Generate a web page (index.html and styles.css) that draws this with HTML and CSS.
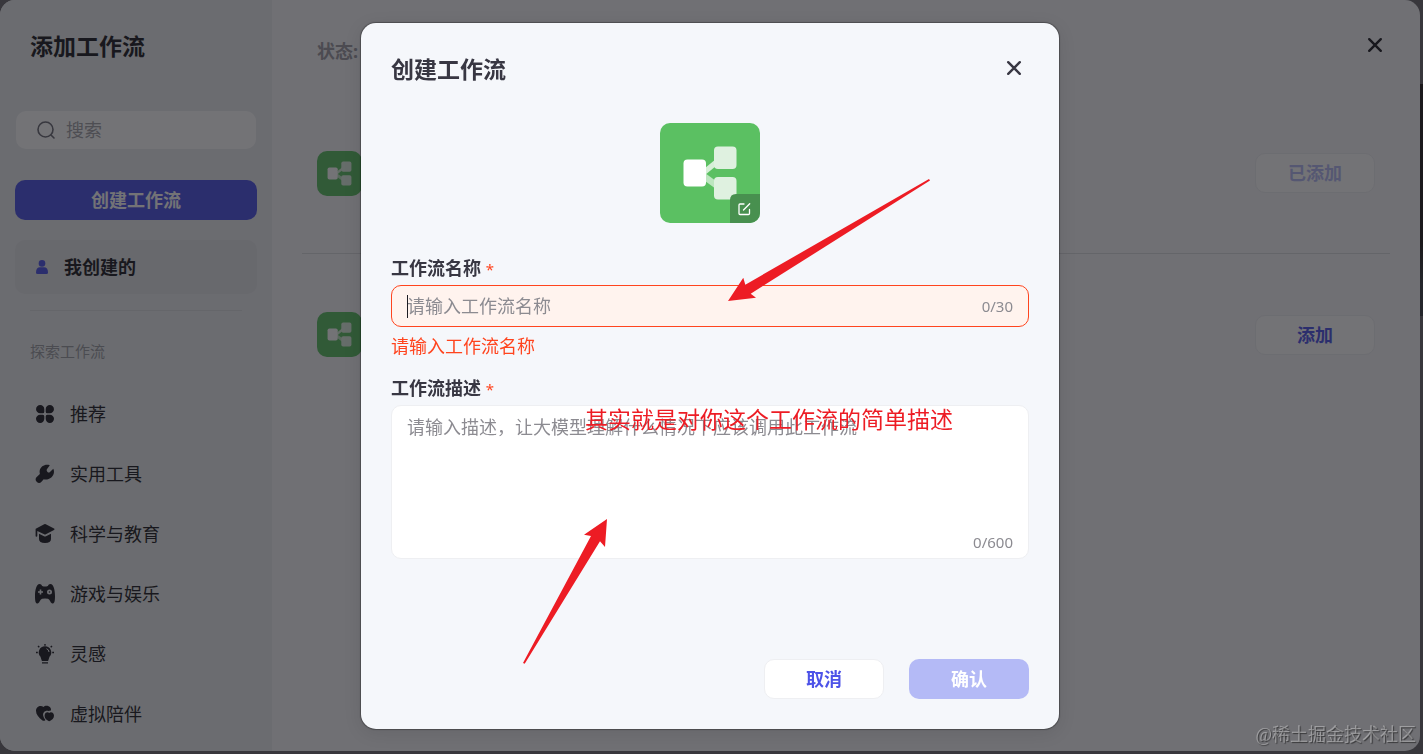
FILE: index.html
```html
<!DOCTYPE html>
<html lang="zh-CN">
<head>
<meta charset="utf-8">
<meta name="viewport" content="width=device-width, initial-scale=1">
<title>创建工作流</title>
<link rel="stylesheet" href="styles.css">
</head>
<body>
<svg class="defs" width="0" height="0" aria-hidden="true">
  <symbol id="flow" viewBox="0 0 100 100">
    <path d="M45 45 L56 36 L56 43 L45 52Z" fill="#fff" opacity=".75"/>
    <path d="M45 50 L56 58 L56 66 L45 58Z" fill="#fff" opacity=".6"/>
    <rect x="54" y="23.5" width="22.5" height="22.5" rx="4" fill="#dff1e0"/>
    <rect x="54" y="54" width="22.5" height="22.5" rx="4" fill="#dff1e0"/>
    <rect x="23.5" y="36.5" width="22.5" height="27" rx="4" fill="#fff"/>
  </symbol>
</svg>

<div class="shell">
  <div class="panel">
    <aside class="sidebar">
      <h1 class="title sidebar-title">添加工作流</h1>
      <label class="search">
        <svg class="icon" viewBox="0 0 20 20" fill="none" stroke="currentColor" stroke-width="1.6" stroke-linecap="round"><circle cx="9.500" cy="9.500" r="7.500"/><path d="M15 15l3 3"/></svg>
        <input class="search-input" type="search" placeholder="搜索" aria-label="搜索">
      </label>
      <button class="btn btn-primary" type="button">创建工作流</button>
      <a class="mine" href="#mine">
        <svg class="mine-icon" viewBox="0 0 14 14" fill="currentColor"><circle cx="7" cy="3.400" r="3.300"/><path d="M1 12.500C1 9 2.500 7.300 5 7.300H9C11.500 7.300 13 9 13 12.500Q13 14 11.500 14H2.500Q1 14 1 12.500Z"/></svg>
        我创建的
      </a>
      <hr class="rule sidebar-rule">
      <h2 class="group">探索工作流</h2>
      <nav class="nav">
        <a class="nav-item" href="#recommend">
          <svg class="icon" viewBox="0 0 20 20" fill="currentColor"><path d="M5.200 1A4.100 4.100 0 0 1 9.300 5.200V7.800Q9.300 9.300 7.800 9.300H5.200A4.150 4.150 0 0 1 5.200 1ZM14.800 1A4.150 4.150 0 0 1 14.800 9.300H12.200Q10.700 9.300 10.700 7.800V5.200A4.100 4.100 0 0 1 14.800 1ZM5.200 10.700H7.800Q9.300 10.700 9.300 12.200V14.800A4.150 4.150 0 1 1 5.200 10.700ZM12.200 10.700H14.800A4.150 4.150 0 1 1 10.700 14.800V12.200Q10.700 10.700 12.200 10.700Z"/></svg>
          推荐</a>
        <a class="nav-item" href="#tools">
          <svg class="icon" viewBox="0 0 20 20" fill="currentColor"><path d="M14.800 1.200C10.500-.400 5.500 2 4.700 6.500C4.500 7.800 4.600 8.800 4.900 9.900L1.700 13A3.200 3.200 0 0 0 1.700 17.800A3.300 3.300 0 0 0 6.500 17.800L8.700 15.300C13.500 16.500 18.800 13 19 8C19 6.600 18.800 5.500 18.300 4.700L14.700 8.300Q13.500 9 12.500 7.900Q11.200 6.900 11.900 5.200Z"/></svg>
          实用工具</a>
        <a class="nav-item" href="#science">
          <svg class="icon" viewBox="0 0 20 20" fill="currentColor"><path d="M9.200 .300Q10 -.100 10.800 .300L19 4.500Q20 5.200 19 5.900L10.800 10.200Q10 10.600 9.200 10.200L2.300 6.900V12Q2.200 12.800 1.400 12.800Q.600 12.800 .600 12V5.500Q.500 4.800 1.200 4.500Z"/><path d="M4 9.700L9 12.200Q10 12.700 11 12.200L16 9.700V15Q16 19 10 19Q4 19 4 15Z"/></svg>
          科学与教育</a>
        <a class="nav-item" href="#games">
          <svg class="icon" viewBox="0 0 20 20" fill="currentColor" fill-rule="evenodd"><path d="M4.500 0C6 0 6.500 .800 7.200 2Q10 3 12.800 2C13.500 .800 14 0 15.500 0C18.500 0 20 6 20 12C20 17 19.500 19.500 17.500 19.500C15.500 19.500 15 15.500 13 14.800Q10 14 7 14.800C5 15.500 4.500 19.500 2.500 19.500C.500 19.500 0 17 0 12C0 6 1.500 0 4.500 0ZM4.700 5.500V7.200H3V8.800H4.700V10.500H6.300V8.800H8V7.200H6.300V5.500ZM14.500 5.500A2.500 2.500 0 1 0 14.500 10.500A2.500 2.500 0 1 0 14.500 5.500ZM14.500 7.200A.8 .8 0 1 1 14.500 8.800A.8 .8 0 1 1 14.500 7.200Z"/></svg>
          游戏与娱乐</a>
        <a class="nav-item" href="#ideas">
          <svg class="icon" viewBox="0 0 20 20" fill="currentColor"><path d="M10 2.300A6.200 6.200 0 0 1 14.500 12.800L13.300 16.500Q13.100 17 12.500 17H7.500Q6.900 17 6.700 16.500L5.500 12.800A6.200 6.200 0 0 1 10 2.300Z"/><path d="M7 18.900H13M10 0V1.800M1 8.500H2.800M17.200 8.500H19M3 2L4.300 3.300M17 2L15.700 3.300" stroke="currentColor" stroke-width="1.400"/><path d="M11.500 4.700Q14 5.500 14 8" fill="none" stroke="#ebedf0" stroke-width="1"/></svg>
          灵感</a>
        <a class="nav-item" href="#companion">
          <svg class="icon" viewBox="0 0 20 20" fill="currentColor"><path d="M8.500 3C10 1.300 13.700 1.500 15.300 3.600Q16.200 4.800 16 6.600Q14.600 6.500 13.700 7.100C10.500 5.800 7.500 8.300 8.200 11.800Q8.600 14 10.500 16Q9 17.400 7.500 16.500C3.500 13.500 1 10.500 1 6.800C1 2.500 5.800 .600 8.500 3Z"/><path d="M14.200 9C15.800 7.500 19 8.600 19 11.700C19 14 17 16 14.900 17Q14.200 17.300 13.500 17C11.400 16 9.600 14 9.600 11.700C9.600 8.600 12.700 7.500 14.200 9Z"/></svg>
          虚拟陪伴</a>
      </nav>
    </aside>

    <main class="content">
      <header class="content-head">
        <span class="status">状态:</span>
        <button class="close" type="button" aria-label="关闭面板"><svg class="icon-close" viewBox="0 0 16 16" fill="none" stroke="currentColor" stroke-width="2.400" stroke-linecap="round"><path d="M2.200 2.200L13.800 13.800M13.800 2.200L2.200 13.800"/></svg></button>
      </header>
      <ul class="list">
        <li class="row">
          <svg class="tile" viewBox="0 0 100 100"><use href="#flow"/></svg>
          <button class="btn btn-plain is-added" type="button" disabled>已添加</button>
        </li>
        <li class="row">
          <svg class="tile" viewBox="0 0 100 100"><use href="#flow"/></svg>
          <button class="btn btn-plain" type="button">添加</button>
        </li>
      </ul>
    </main>
  </div>
</div>

<div class="overlay">
  <form class="modal" role="dialog" aria-labelledby="dialog-title">
    <header class="modal-head">
      <h2 class="title" id="dialog-title">创建工作流</h2>
      <button class="close" type="button" aria-label="关闭"><svg class="icon-close" viewBox="0 0 16 16" fill="none" stroke="currentColor" stroke-width="2.400" stroke-linecap="round"><path d="M2.200 2.200L13.800 13.800M13.800 2.200L2.200 13.800"/></svg></button>
    </header>

    <button class="logo" type="button" aria-label="编辑图标">
      <svg viewBox="0 0 100 100" width="100" height="100">
        <use href="#flow"/>
        <path d="M70 100V77Q70 71 76 71H100V100Z" fill="#48904f"/>
        <g fill="none" stroke="#fff" stroke-width="1.300" stroke-linecap="round" stroke-linejoin="round"><path d="M84 81H80Q79 81 79 82V90.500Q79 91.500 80 91.500H88.500Q89.500 91.500 89.500 90.500V86.500M83.500 87L89.700 80.700"/></g>
      </svg>
    </button>

    <label class="label" for="flow-name">工作流名称 <span class="star">*</span></label>
    <div class="field field-name">
      <input class="input" id="flow-name" type="text" maxlength="30" placeholder="请输入工作流名称" aria-invalid="true" aria-describedby="name-error">
      <span class="count">0/30</span>
    </div>
    <p class="error" id="name-error">请输入工作流名称</p>

    <label class="label" for="flow-desc">工作流描述 <span class="star">*</span></label>
    <div class="field field-desc">
      <textarea class="input textarea" id="flow-desc" maxlength="600" placeholder="请输入描述，让大模型理解什么情况下应该调用此工作流"></textarea>
      <span class="count">0/600</span>
    </div>

    <footer class="actions">
      <button class="btn btn-plain action" type="button">取消</button>
      <button class="btn btn-confirm action" type="submit" disabled>确认</button>
    </footer>

    <svg class="arrows" viewBox="0 0 698 706" aria-hidden="true">
      <path d="M568 156L384.300 261.700L382.300 254.700L367 278L395 274.700L389.700 270.700L569 157.500Z"/>
      <path d="M162 640L230 513L223 511.700L246 496L244 524L239 518.300L163.700 640.700Z"/>
    </svg>
    <p class="note">其实就是对你这个工作流的简单描述</p>
  </form>
</div>

<p class="watermark">@稀土掘金技术社区</p>
</body>
</html>
```

FILE: styles.css
```css
* { box-sizing: border-box; }

body {
  margin: 0;
  color: #1d1c23;
  font: 18px/26px "Noto Sans", "Noto Sans CJK SC", sans-serif;
}

h1, h2, p, ul { margin: 0; padding: 0; }

button, input, textarea { font: inherit; color: inherit; }

a { color: inherit; text-decoration: none; }

.defs { position: absolute; }

.shell {
  height: 100vh;
  padding: 0 3px 3px 0;
  background:
    linear-gradient(#242020 0 160px, #3a3f44 200px) right 84px / 3px 232px no-repeat,
    #6c6a6e;
}

.panel {
  display: flex;
  height: 100%;
  overflow: hidden;
  border-radius: 15px;
  background: #f7f7fa;
}

.title {
  font-size: 23px;
  line-height: 32px;
  font-weight: 700;
}

.btn {
  display: block;
  height: 40px;
  padding: 0;
  border: 0;
  border-radius: 10px;
  font-weight: 700;
}

.btn-primary { width: 100%; background: #4d53e8; color: #fff; }

.btn-plain {
  width: 120px;
  border: 1px solid #eeeff2;
  background: #fff;
  color: #4d53e8;
}

.btn-confirm { background: #b4baf6; color: #fff; }

.is-added { color: #b4baf6; }

.close {
  display: grid;
  place-items: center;
  width: 30px;
  height: 30px;
  padding: 0;
  border: 0;
  background: none;
}

.icon { flex: none; width: 20px; height: 20px; }
.icon-close { width: 16px; height: 16px; }

.sidebar {
  flex: none;
  width: 272px;
  padding: 30px 15px 0;
  background: #ebedf0;
}

.sidebar-title { padding-left: 15px; }

.search {
  display: flex;
  align-items: center;
  gap: 10px;
  height: 38px;
  margin: 49px 1px 31px;
  padding: 0 20px;
  border-radius: 10px;
  background: #fff;
  color: #6b6b75;
}

.search-input {
  flex: 1;
  min-width: 0;
  padding: 0;
  border: 0;
  outline: 0;
  background: none;
}

.search-input::placeholder { color: #a2a2a8; opacity: 1; }

.mine {
  display: flex;
  align-items: center;
  gap: 15px;
  height: 54px;
  margin-top: 20px;
  padding-left: 20px;
  border-radius: 10px;
  background: #e3e5e8;
  font-weight: 700;
}

.mine-icon { width: 14px; height: 14px; color: #4d53e8; }

.rule { height: 1px; border: 0; background: #dcdee1; }
.sidebar-rule { margin: 16px 15px 28px; }

.group {
  padding-left: 15px;
  color: #9c9da3;
  font-size: 15px;
  line-height: 24px;
  font-weight: 400;
}

.nav { margin-top: 21px; }

.nav-item {
  display: flex;
  align-items: center;
  gap: 15px;
  height: 60px;
  padding-left: 20px;
}

.content { flex: 1; min-width: 0; padding: 0 30px; }

.content-head {
  display: flex;
  justify-content: space-between;
  height: 93px;
  padding: 30px 0 0 15px;
}

.status { padding-top: 8px; color: #9d9ca4; font-weight: 700; }

.list { list-style: none; }

.row {
  display: flex;
  align-items: center;
  justify-content: space-between;
  height: 161px;
  padding: 0 15px;
}

.row:not(:last-child) { border-bottom: 1px solid #dadbdf; }

.tile {
  width: 45px;
  height: 45px;
  border-radius: 10px;
  background: #5bc062;
}

.overlay {
  position: fixed;
  inset: 0;
  display: grid;
  place-items: center;
  padding: 0 3px 3px 0;
  background: rgba(22, 22, 26, 0.6);
}

.modal {
  position: relative;
  display: flex;
  flex-direction: column;
  width: 698px;
  max-width: 100%;
  padding: 30px;
  border-radius: 15px;
  background: #f5f7fb;
  box-shadow: 0 0 1px 1px rgba(0, 0, 0, 0.3), 0 4px 18px rgba(0, 0, 0, 0.1);
  color: #383743;
}

.modal-head { display: flex; justify-content: space-between; }

.logo {
  display: block;
  align-self: center;
  width: 100px;
  height: 100px;
  margin: 38px 0 32px;
  padding: 0;
  overflow: hidden;
  border: 0;
  border-radius: 10px;
  background: #5bc062;
}

.logo svg { display: block; }

.label { margin-bottom: 4px; font-weight: 700; }

.star {
  color: #ff441e;
  font-size: 15px;
  line-height: 15px;
  font-weight: 400;
}

.field {
  position: relative;
  display: flex;
  border: 1px solid #eeeff2;
  border-radius: 10px;
  background: #fff;
}

.field-name {
  align-items: center;
  height: 42px;
  padding: 0 15px;
  border-color: #ff441e;
  background: #fff3ee;
}

/* text cursor at the start of the name field */
.field-name::before {
  content: "";
  position: absolute;
  left: 15px;
  top: 9px;
  width: 1px;
  height: 23px;
  background: #1d1c23;
}

.field-desc {
  flex-direction: column;
  height: 154px;
  padding: 8px 15px 6px;
}

.input {
  flex: 1;
  min-width: 0;
  padding: 0;
  border: 0;
  outline: 0;
  background: none;
}

.textarea { resize: none; overflow: hidden; }

.input::placeholder { color: #8c8b91; opacity: 1; }

.count {
  align-self: flex-end;
  color: #8c8b91;
  font-size: 15px;
  line-height: 20px;
}

.field-name .count { align-self: center; }

.error { margin: 6px 0 16px; color: #ff441e; }

.actions {
  display: flex;
  justify-content: flex-end;
  gap: 25px;
  margin-top: 100px;
}

.action { width: 120px; }

.arrows {
  position: absolute;
  inset: 0;
  width: 100%;
  height: 100%;
  fill: #ed1c24;
  pointer-events: none;
}

.note {
  position: absolute;
  left: 224px;
  top: 380px;
  color: #ed1c24;
  font-size: 23px;
  line-height: 32px;
  white-space: nowrap;
  pointer-events: none;
}

.watermark {
  position: fixed;
  right: 7px;
  bottom: 7px;
  color: rgba(255, 255, 255, 0.35);
  font-family: "Liberation Serif", "Noto Sans CJK SC", serif;
  line-height: 24px;
  text-shadow: 1px 1px 1px rgba(0, 0, 0, 0.5);
}
```
